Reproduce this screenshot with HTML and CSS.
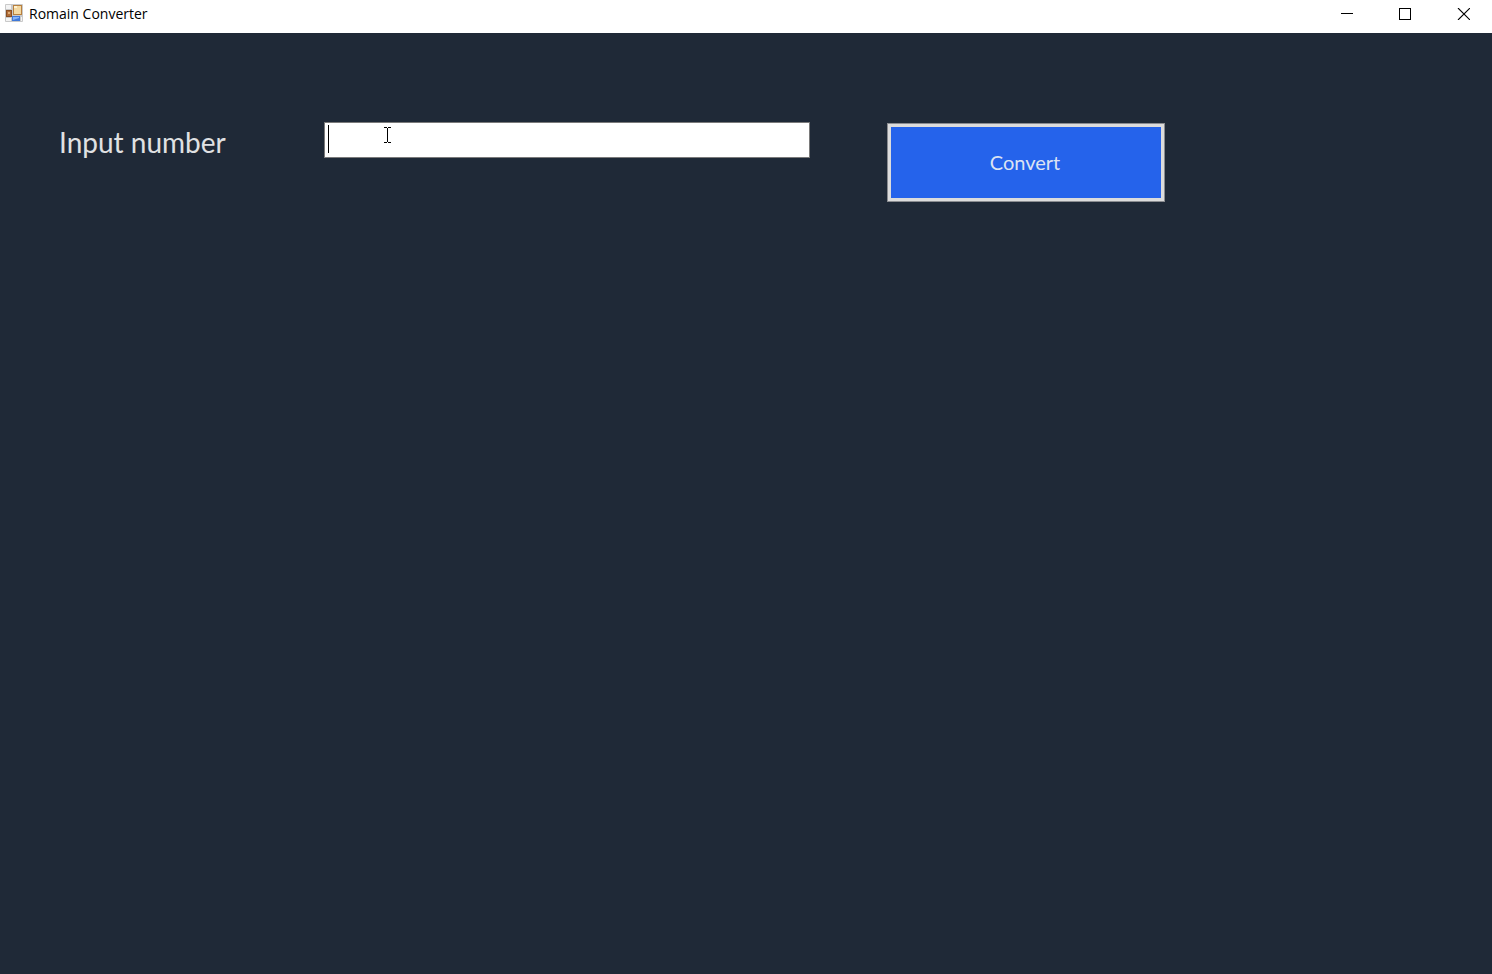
FILE: index.html
```html
<!DOCTYPE html>
<html lang="en">
<head>
<meta charset="utf-8">
<meta name="viewport" content="width=device-width, initial-scale=1">
<title>Romain Converter</title>
<link rel="stylesheet" href="styles.css">
</head>
<body>
<header class="titlebar">
  <svg class="app-icon" width="18" height="18" viewBox="0 0 18 18" aria-hidden="true">
    <rect width="18" height="18" rx="1" fill="#c9c9c9"/>
    <path d="M1 1h5v4H1zM1 14h5v3H1zM16 13h1v4h-1z" fill="#f3f3f3"/>
    <rect x="1" y="6" width="6" height="7" fill="#8a4f24"/>
    <rect x="2" y="7" width="4" height="5" fill="#b06d38"/>
    <rect x="3" y="8" width="2" height="2" fill="#e0ad78"/>
    <rect x="8" y="1" width="9" height="10" fill="#b8803f"/>
    <rect x="9" y="2" width="7" height="8" fill="#f4d9a2"/>
    <rect x="9" y="2" width="3" height="2" fill="#fff1cf"/>
    <rect x="7" y="12" width="8" height="5" fill="#3f78d8"/>
    <path d="M8 13h6v1l-6 2z" fill="#86b4fa"/>
  </svg>
  <h1 class="title">Romain Converter</h1>
  <div class="window-controls">
    <button class="window-button" type="button" aria-label="Minimize">
      <svg width="12" height="12" viewBox="0 0 12 12" shape-rendering="crispEdges"><path d="M0 5h12v1H0z" fill="#000"/></svg>
    </button>
    <button class="window-button" type="button" aria-label="Maximize">
      <svg width="12" height="12" viewBox="0 0 12 12" shape-rendering="crispEdges"><path d="M.5.5h11v11H.5z" fill="none" stroke="#000"/></svg>
    </button>
    <button class="window-button" type="button" aria-label="Close">
      <svg width="14" height="12" viewBox="0 0 14 12"><path d="M2 0l12 12M14 0L2 12" fill="none" stroke="#000" stroke-width="1.1"/></svg>
    </button>
  </div>
</header>
<main class="content">
  <form class="converter">
    <label class="label" for="number">Input number</label>
    <div class="field">
      <input class="number-input" id="number" type="text" autocomplete="off">
      <span class="caret"></span>
      <svg class="pointer" width="7" height="16" viewBox="0 0 7 16" shape-rendering="crispEdges" aria-hidden="true"><path d="M0 0h3v1H0zM4 0h3v1H4zM3 1h1v14H3zM0 15h3v1H0zM4 15h3v1H4z" fill="#000"/></svg>
    </div>
    <button class="convert" type="button">Convert</button>
  </form>
</main>
</body>
</html>
```
FILE: styles.css
```css
* {
  box-sizing: border-box;
}

body {
  display: flex;
  flex-direction: column;
  min-height: 100vh;
  margin: 0;
  background: #1f2937;
  font-family: Lato, sans-serif;
}

.titlebar {
  display: flex;
  align-items: flex-start;
  height: 33px;
  padding-left: 5px;
  background: #fff;
}

.app-icon {
  margin-top: 4px;
}

.title {
  margin: 0 auto 0 6px;
  color: #000;
  font: 400 14px/28px "Open Sans", sans-serif;
}

.window-controls {
  display: flex;
}

.window-button {
  display: flex;
  align-items: center;
  justify-content: center;
  width: 58px;
  height: 28px;
  padding: 0;
  border: 0;
  background: transparent;
}

.content {
  flex: 1;
  padding-top: 89px;
}

.converter {
  display: grid;
  grid-template-columns: 324fr 486fr 77fr 278fr 327fr;
  align-items: start;
}

.label {
  padding-left: 59px;
  color: #e0e1e3;
  font-size: 28px;
  line-height: 40px;
  white-space: nowrap;
}

.field {
  position: relative;
}

.number-input {
  display: block;
  width: 100%;
  height: 36px;
  padding: 0 4px;
  border: 1px solid #7a7a7a;
  outline: 0;
  background: #fff;
  color: #000;
  font: 24px Lato, sans-serif;
}

.caret {
  position: absolute;
  top: 3px;
  left: 4px;
  width: 1px;
  height: 28px;
  background: #000;
}

.pointer {
  position: absolute;
  top: 5px;
  left: 60px;
}

.convert {
  grid-column: 4;
  height: 79px;
  margin-top: 1px;
  padding: 0 2px 2px 0;
  border: 4px solid #dcdcdc;
  outline: 1px solid #8a8c90;
  outline-offset: -1px;
  background: #2563eb;
  color: #dce3f3;
  font: 20px/24px Lato, sans-serif;
}
```
